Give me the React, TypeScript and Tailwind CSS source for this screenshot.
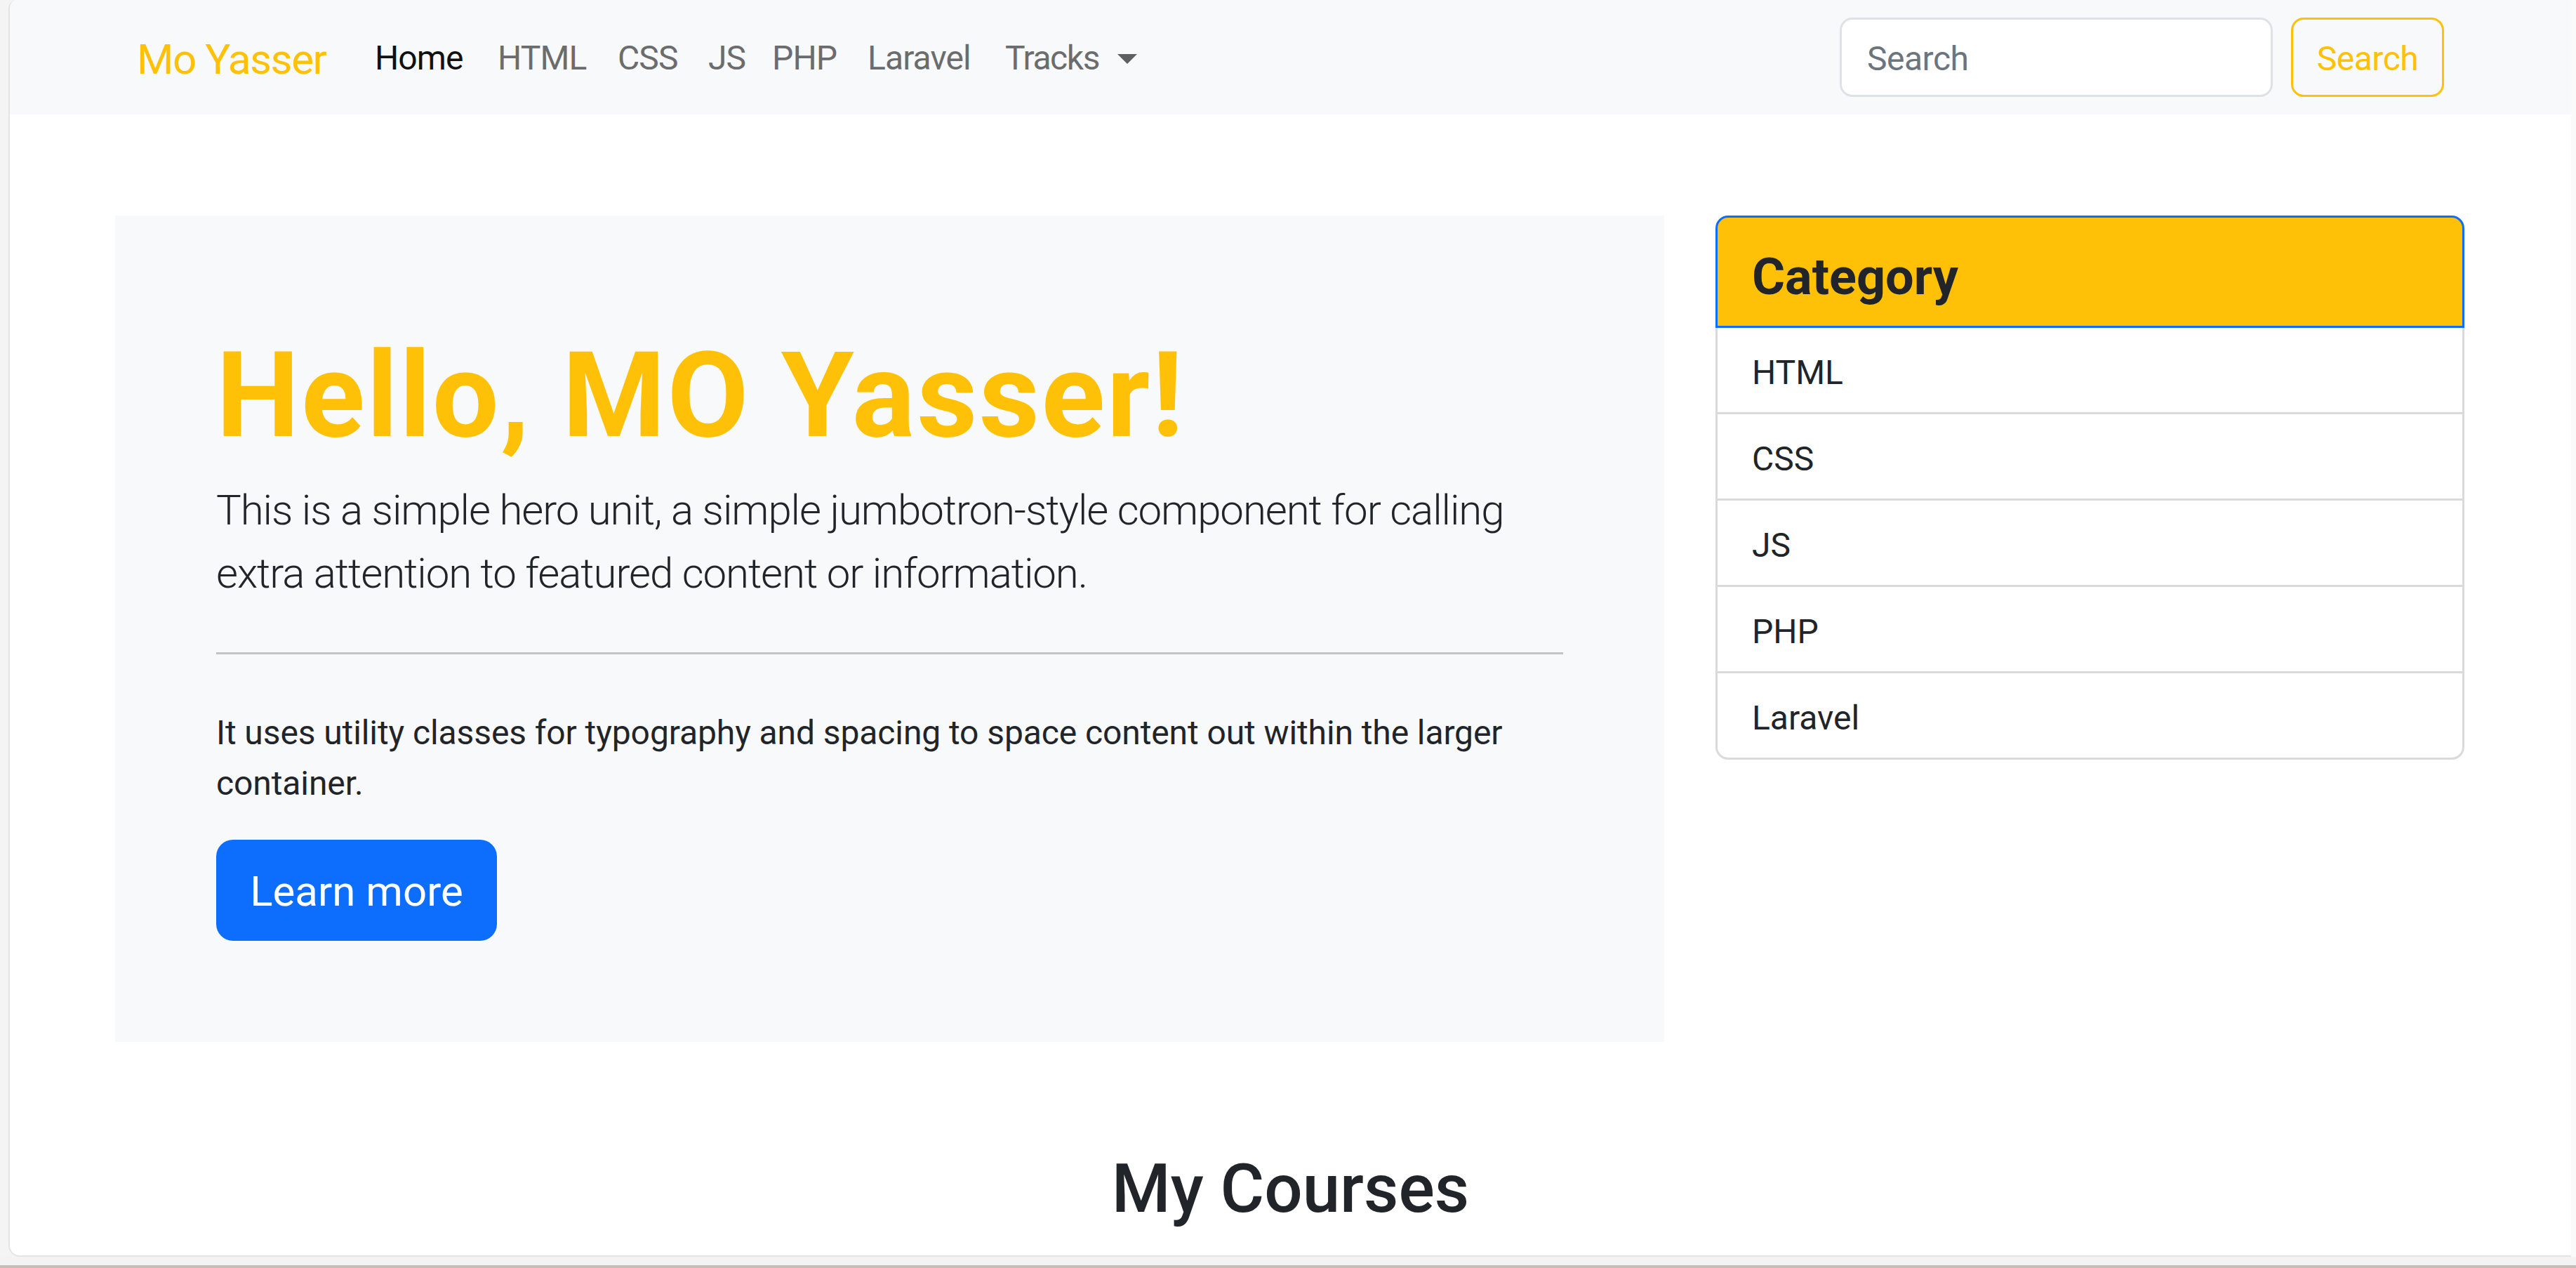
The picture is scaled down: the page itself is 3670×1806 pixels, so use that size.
const links = [
  { label: "HTML", w: "w-[171px]" },
  { label: "CSS", w: "w-[129px]" },
  { label: "JS", w: "w-[91px]" },
  { label: "PHP", w: "w-[136px]" },
  { label: "Laravel", w: "w-[196px]" },
];
const categories = ["HTML", "CSS", "JS", "PHP", "Laravel"];

function Navbar() {
  return (
    <nav className="flex h-[163px] shrink-0 items-center bg-[#f8f9fa] pl-[181px] pr-[181px]">
      <a className="w-[315px] shrink-0 whitespace-nowrap pt-[6px] text-[60px] leading-[90px] tracking-[-1.4px] text-[#ffc107]">
        Mo Yasser
      </a>
      <ul className="flex items-center pt-[3px]">
        <li className="w-[175px] whitespace-nowrap pl-[24px] text-[48px] leading-[72px] tracking-[-0.9px] text-[#111]">
          Home
        </li>
        {links.map((l) => (
          <li
            key={l.label}
            className={`${l.w} whitespace-nowrap pl-[24px] text-[48px] leading-[72px] tracking-[-0.9px] text-[#6b6c6d]`}
          >
            {l.label}
          </li>
        ))}
        <li className="flex items-center whitespace-nowrap px-[24px] text-[48px] leading-[72px] tracking-[-1.4px] text-[#6b6c6d]">
          Tracks
          {/* bootstrap caret */}
          <span className="ml-[26px] mt-[2px] h-0 w-0 border-x-[14px] border-t-[14px] border-x-transparent border-t-[#5f6061]" />
        </li>
      </ul>
      <form className="ml-auto flex items-center gap-[26px]">
        <input
          placeholder="Search"
          className="h-[113px] w-[617px] rounded-[18px] border-[3px] border-[#dee2e6] bg-white px-[36px] pt-[4px] text-[48px] tracking-[-0.5px] text-[#212529] outline-none placeholder:text-[#6c757d]"
        />
        <button
          type="button"
          className="h-[113px] w-[218px] rounded-[18px] border-[3px] border-[#ffc107] pt-[4px] text-[48px] tracking-[-0.5px] text-[#ffc107]"
        >
          Search
        </button>
      </form>
    </nav>
  );
}

function Hero() {
  return (
    <div className="w-[2207px] shrink-0 bg-[#f8f9fa] p-[144px]">
      <h1 className="mb-[12px] pt-[12px] text-[168px] font-bold leading-[1.2] tracking-[2.4px] text-[#ffc107]">
        Hello, MO Yasser!
      </h1>
      <p className="pt-[5px] text-[60px] font-light leading-[90px] tracking-[-1.1px] text-[#212529]">
        This is a simple hero unit, a simple jumbotron-style component for calling
        <br />
        extra attention to featured content or information.
      </p>
      <hr className="mb-[72px] mt-[67px] border-t-[3px] border-[#c2c3c4]" />
      <p className="mb-[44px] pt-[4px] text-[48px] leading-[72px] tracking-[-0.1px] text-[#212529]">
        It uses utility classes for typography and spacing to space content out within the larger
        <br />
        container.
      </p>
      <button
        type="button"
        className="h-[144px] w-[400px] rounded-[24px] bg-[#0d6efd] pt-[4px] text-[60px] leading-[90px] text-white"
      >
        Learn more
      </button>
    </div>
  );
}

function CategoryCard() {
  return (
    <div className="w-[1067px] shrink-0 self-start">
      <div className="h-[160px] rounded-t-[18px] border-[3px] border-[#0d6efd] bg-[#ffc107] px-[49px] pt-[42px]">
        <h4 className="text-[72px] font-bold leading-[86px] text-[#212529]">Category</h4>
      </div>
      <ul className="rounded-b-[18px] border-x-[3px] border-b-[3px] border-[#dadada] bg-white">
        {categories.map((c, i) => (
          <li
            key={c}
            className={`h-[120px] px-[49px] pt-[28px] text-[48px] leading-[72px] text-[#212529] ${
              i < categories.length - 1 ? "h-[123px] border-b-[3px] border-[#dadada]" : ""
            }`}
          >
            {c}
          </li>
        ))}
      </ul>
    </div>
  );
}

export default function App() {
  return (
    <div
      className="flex h-[1806px] w-[3670px] flex-col overflow-hidden bg-[#f4f4f4]"
      style={{ fontFamily: "Roboto, 'Noto Sans', sans-serif" }}
    >
      <div className="flex h-[1790px] shrink-0">
        <div className="ml-[12px] flex h-full w-[3651px] flex-col overflow-hidden rounded-tl-[12px] rounded-bl-[16px] border-b-[2px] border-l-[2px] border-[#e4e4e4] bg-white">
          <Navbar />
          <main className="mx-[150px] mt-[144px] flex gap-[73px]">
            <Hero />
            <CategoryCard />
          </main>
          <h2 className="mt-[152px] text-center text-[96px] font-medium leading-[1.2] text-[#212529]">
            My Courses
          </h2>
        </div>
        <div className="flex-1 bg-[#fafafa]" />
      </div>
      <div className="h-[12px] shrink-0 bg-[#f3f3f3]" />
      <div className="h-[4px] shrink-0 bg-[#c9bcb3]" />
    </div>
  );
}
